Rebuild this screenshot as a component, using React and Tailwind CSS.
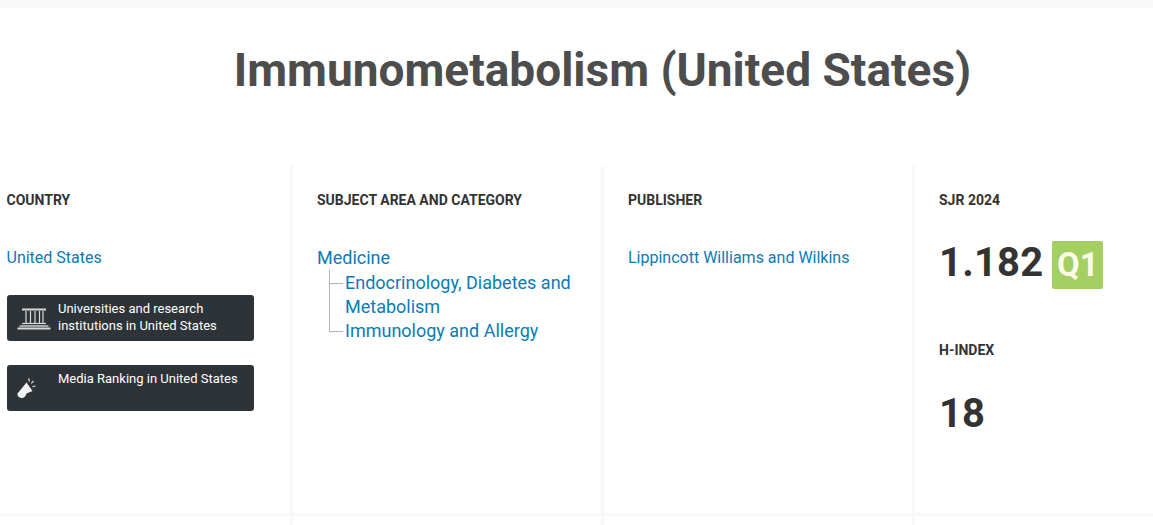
import React from 'react';

const headingClass = 'text-sm font-bold leading-5 uppercase text-[#333]';
const linkClass = 'text-[#0a7cb5]';

const BuildingIcon = () => (
    <svg width="34" height="22" viewBox="0 0 34 22" fill="none" stroke="#d9d9d9">
        <path d="M5 1.5h24" strokeWidth="2" />
        <path d="M9 3v12M13.5 3v12M18 3v12M22.5 3v12M26 3v12" strokeWidth="1.2" />
        <path d="M5 15.5h24" strokeWidth="1.2" />
        <path d="M2.5 18h29" strokeWidth="1.4" />
        <path d="M0.5 20.5h33" strokeWidth="1.8" />
    </svg>
);

const MegaphoneIcon = () => (
    <svg width="20" height="22" viewBox="0 0 20 22" fill="#f2f2f2">
        <path d="M0.5 15.5 L9.5 4.5 L15.5 13 L9.5 15.5 C9 18.5 6.5 20.5 4 20 C1.5 19.5 0 17.5 0.5 15.5 Z" />
        <path d="M11.5 0.5l1 3M16.5 3l-2.2 2.3M18.5 8l-3 .6" stroke="#d9d9d9" strokeWidth="1.2" fill="none" />
    </svg>
);

const DarkButton = ({ icon, children }) => (
    <div className="flex h-[46px] w-[247px] rounded-[3px] bg-[#2e3337] text-[13px] leading-[17px] text-white">
        <div className="flex w-[51.5px] shrink-0 items-center justify-start pl-[10px] pt-[2px]">{icon}</div>
        <div className="pt-[5px]">{children}</div>
    </div>
);

export default function App() {
    return (
        <div className="h-screen overflow-hidden bg-white font-['Roboto',sans-serif]">
            <div className="h-2 bg-[#f8f8f8]" />
            <h1 className="mt-[31px] pl-[52px] text-center text-[46px] font-bold leading-[62px] text-[#4d4d4d]">
                Immunometabolism (United States)
            </h1>

            <div className="mt-[65px] grid grid-cols-[293px_311px_311px_238px] border-b-[3px] border-[#f8f8f8]">
                <div className="h-[347px] border-r-[3px] border-[#f8f8f8] pl-[6.5px] pt-[24px]">
                    <h2 className={headingClass}>Country</h2>
                    <p className={`mt-[36px] text-base leading-6 ${linkClass}`}>United States</p>
                    <div className="mt-[25px] flex flex-col gap-6">
                        <DarkButton icon={<BuildingIcon />}>
                            Universities and research<br />institutions in United States
                        </DarkButton>
                        <DarkButton icon={<MegaphoneIcon />}>Media Ranking in United States</DarkButton>
                    </div>
                </div>

                <div className="border-r-[3px] border-[#f8f8f8] pl-[24px] pt-[24px]">
                    <h2 className={headingClass}>Subject Area and Category</h2>
                    <p className={`mt-[36px] text-lg leading-6 ${linkClass}`}>Medicine</p>
                    <ul className={`mt-[1px] text-lg leading-6 ${linkClass}`}>
                        <li className="relative pl-7 pr-6">
                            <span className="absolute left-[12px] top-[-1px] h-[calc(100%+1px)] w-px bg-[#b3b3b3]" />
                            <span className="absolute left-[12px] top-3 h-px w-[14px] bg-[#b3b3b3]" />
                            Endocrinology, Diabetes and Metabolism
                        </li>
                        <li className="relative pl-7">
                            <span className="absolute left-[12px] top-0 h-3 w-px bg-[#b3b3b3]" />
                            <span className="absolute left-[12px] top-3 h-px w-[14px] bg-[#b3b3b3]" />
                            Immunology and Allergy
                        </li>
                    </ul>
                </div>

                <div className="border-r-[3px] border-[#f8f8f8] pl-[24px] pt-[24px]">
                    <h2 className={headingClass}>Publisher</h2>
                    <p className={`mt-[36px] text-base leading-6 ${linkClass}`}>Lippincott Williams and Wilkins</p>
                </div>

                <div className="pl-[24px] pt-[24px]">
                    <h2 className={headingClass}>SJR 2024</h2>
                    <div className="mt-[31px] flex items-start gap-[9px]">
                        <span className="mt-[-2px] text-[40px] font-bold leading-[48px] tracking-[0.2px] text-[#333]">1.182</span>
                        <span className="flex h-12 w-[51px] items-center justify-center rounded-[2px] bg-[#a4cf63] text-[33px] font-bold text-[#fbfbe8]">
                            Q1
                        </span>
                    </div>
                    <h2 className={`mt-[51px] ${headingClass}`}>H-index</h2>
                    <p className="mt-[30px] text-[40px] font-bold leading-[48px] text-[#333]">18</p>
                </div>
            </div>

            <div className="grid h-3 grid-cols-[293px_311px_311px_238px]">
                <div className="border-r-[3px] border-[#f8f8f8]" />
                <div className="border-r-[3px] border-[#f8f8f8]" />
                <div className="border-r-[3px] border-[#f8f8f8]" />
            </div>
        </div>
    );
}
